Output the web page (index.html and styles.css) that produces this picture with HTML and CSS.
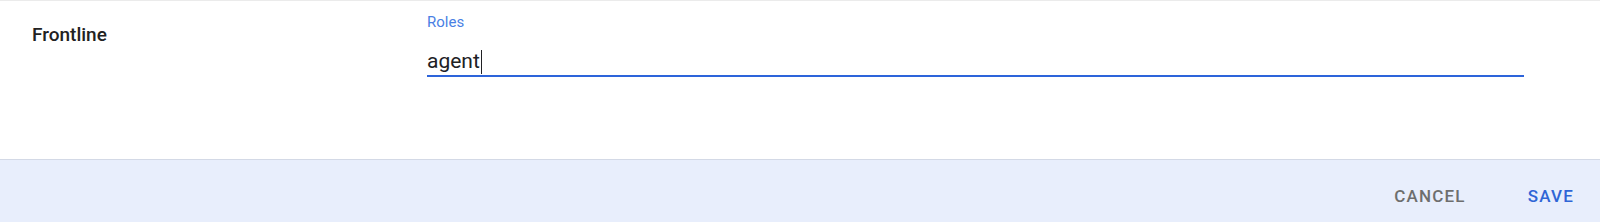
FILE: index.html
```html
<!DOCTYPE html>
<html lang="en">

<head>
    <meta charset="UTF-8">
    <meta name="viewport" content="width=device-width, initial-scale=1.0">
    <title>Edit roles</title>
    <link rel="stylesheet" href="styles.css">
</head>

<body>
    <main class="panel">
        <div class="row">
            <div class="row-name">Frontline</div>
            <div class="field">
                <label class="field-label">Roles</label>
                <div class="field-input">
                    <span class="value">agent</span><span class="caret"></span>
                </div>
            </div>
        </div>
        <div class="actions">
            <button class="btn btn-cancel">Cancel</button>
            <button class="btn btn-save">Save</button>
        </div>
    </main>
</body>

</html>
```

FILE: styles.css
```css
html,
body {
    margin: 0;
    padding: 0;
    box-sizing: border-box;
}

body {
    width: 1600px;
    height: 222px;
    font-family: Roboto, "Liberation Sans", Arial, sans-serif;
    background: #e8eefc;
    overflow: hidden;
}

.panel {
    display: flex;
    flex-direction: column;
}

.row {
    display: flex;
    height: 158px;
    background: #fff;
    border-top: 1px solid #ebebeb;
    padding: 0 76px 0 32px;
}

.row-name {
    width: 395px;
    flex-shrink: 0;
    padding-top: 22px;
    font-size: 19px;
    line-height: 24px;
    font-weight: 500;
    color: #222;
}

.field {
    flex: 1;
    padding-top: 13px;
}

.field-label {
    display: block;
    font-size: 15px;
    line-height: 16px;
    color: #4a7fe4;
}

.field-input {
    display: flex;
    align-items: center;
    margin-top: 17px;
    height: 28px;
    border-bottom: 2px solid #2d64da;
    font-size: 21px;
    line-height: 24px;
    color: #202124;
}

.caret {
    display: inline-block;
    width: 1px;
    height: 24px;
    margin-left: 1px;
    margin-top: 2px;
    background: #202124;
}

.actions {
    display: flex;
    justify-content: flex-end;
    gap: 62px;
    height: 62px;
    border-top: 1px solid #d3d9e6;
    padding: 26px 26px 0 0;
    box-sizing: border-box;
}

.btn {
    border: none;
    background: none;
    padding: 0;
    font-family: inherit;
    font-size: 17px;
    line-height: 20px;
    height: 20px;
    font-weight: 500;
    letter-spacing: 1.2px;
    text-transform: uppercase;
    cursor: pointer;
}

.btn-cancel {
    color: #6e6e6e;
}

.btn-save {
    color: #2f65d6;
}
```
